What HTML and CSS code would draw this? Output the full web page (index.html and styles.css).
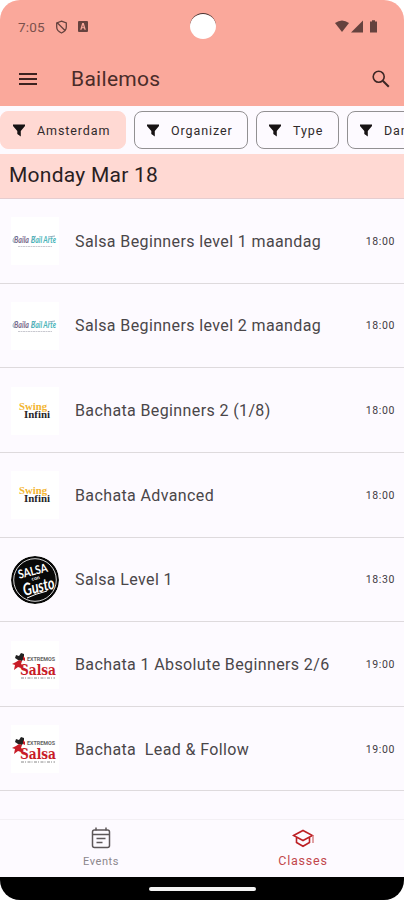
FILE: index.html
```html
<!DOCTYPE html>
<html lang="en">
<head>
    <meta charset="UTF-8">
    <meta name="viewport" content="width=device-width, initial-scale=1.0">
    <title>Bailemos</title>
    <link rel="stylesheet" href="styles.css">
</head>
<body>
    <svg class="defs" width="0" height="0">
        <symbol id="filter" viewBox="0 0 12 13">
            <path d="M0 0.5h12v1.6L7.8 7v5.5L4.3 10V7L0 2.1z"/>
        </symbol>
    </svg>

    <div class="phone">
        <header>
            <div class="status">
                <span class="clock">7:05</span>
                <svg class="blocked" width="13" height="14" viewBox="0 0 13 14"><path d="M6.500 1.200L11.300 3v4q0 4-4.800 6Q1.700 11 1.700 7V3zM2.500 3l8 8" fill="none" stroke="#65423e" stroke-width="1.300"/></svg>
                <svg class="badgeA" width="10" height="11" viewBox="0 0 10 11"><path fill="#65423e" fill-rule="evenodd" d="M1 0h8q1 0 1 1v9q0 1-1 1H1q-1 0-1-1V1q0-1 1-1zM4.200 2L2.200 8.800h1.300L4 7.300h2l.5 1.500h1.300L5.800 2zM5 3.800l.7 2.400H4.300z"/></svg>
                <svg class="signals" width="43" height="13" viewBox="0 0 43 13">
                    <g fill="#65423e">
                        <path d="M0 3q7-5 14 0L7 12z"/>
                        <path d="M28 0.500v12H16z"/>
                        <path d="M35 1.500h2V0.300h3v1.200h2v11h-7z"/>
                    </g>
                </svg>
                <span class="camera"></span>
            </div>
            <div class="toolbar">
                <svg width="18" height="14" viewBox="0 0 18 14"><path d="M0 2h18M0 7h18M0 12h18" stroke="#3c2220" stroke-width="1.900"/></svg>
                <h1>Bailemos</h1>
                <svg class="search" width="18" height="18" viewBox="0 0 18 18"><g fill="none" stroke="#3c2725"><circle cx="6.700" cy="6.700" r="5.500" stroke-width="1.600"/><path d="M10.800 10.800l6 6" stroke-width="2"/></g></svg>
            </div>
        </header>

        <div class="chips">
            <div class="chip active"><svg><use href="#filter"/></svg><span>Amsterdam</span></div>
            <div class="chip organizer"><svg><use href="#filter"/></svg><span>Organizer</span></div>
            <div class="chip type"><svg><use href="#filter"/></svg><span>Type</span></div>
            <div class="chip dance"><svg><use href="#filter"/></svg><span>Dance</span></div>
        </div>

        <h2>Monday Mar 18</h2>

        <div class="list">
            <div class="item">
                <svg class="logo baila" viewBox="0 0 48 48">
                    <text x="3" y="26" textLength="15" lengthAdjust="spacingAndGlyphs" fill="#79698b">Baila</text>
                    <text x="20" y="26" textLength="25" lengthAdjust="spacingAndGlyphs" fill="#4ab5b9">Bail Arte</text>
                    <path d="M5 25C1 27 1 22 5 19M21 26c-2-1 1-5 4-7M37 20l7-1" fill="none" stroke="#87a6b8" stroke-width=".9"/>
                    <path d="M7 29.500h34" stroke="#c9c9d0" stroke-width="1.200" stroke-dasharray="2 .5"/>
                </svg>
                <p>Salsa Beginners level 1 maandag</p><time>18:00</time>
            </div>
            <div class="item">
                <svg class="logo baila" viewBox="0 0 48 48">
                    <text x="3" y="26" textLength="15" lengthAdjust="spacingAndGlyphs" fill="#79698b">Baila</text>
                    <text x="20" y="26" textLength="25" lengthAdjust="spacingAndGlyphs" fill="#4ab5b9">Bail Arte</text>
                    <path d="M5 25C1 27 1 22 5 19M21 26c-2-1 1-5 4-7M37 20l7-1" fill="none" stroke="#87a6b8" stroke-width=".9"/>
                    <path d="M7 29.500h34" stroke="#c9c9d0" stroke-width="1.200" stroke-dasharray="2 .5"/>
                </svg>
                <p>Salsa Beginners level 2 maandag</p><time>18:00</time>
            </div>
            <div class="item">
                <svg class="logo swing" viewBox="0 0 48 48">
                    <text x="8" y="23" textLength="28" lengthAdjust="spacingAndGlyphs" fill="#f3b52f">Swing</text>
                    <text x="13" y="31" textLength="26" lengthAdjust="spacingAndGlyphs" fill="#252529">Infini</text>
                </svg>
                <p>Bachata Beginners 2 (1/8)</p><time>18:00</time>
            </div>
            <div class="item">
                <svg class="logo swing" viewBox="0 0 48 48">
                    <text x="8" y="23" textLength="28" lengthAdjust="spacingAndGlyphs" fill="#f3b52f">Swing</text>
                    <text x="13" y="31" textLength="26" lengthAdjust="spacingAndGlyphs" fill="#252529">Infini</text>
                </svg>
                <p>Bachata Advanced</p><time>18:00</time>
            </div>
            <div class="item">
                <svg class="logo gusto" viewBox="0 0 48 48">
                    <circle cx="24" cy="24" r="24" fill="#080808"/>
                    <circle cx="24" cy="24" r="21.300" fill="none" stroke="#d9d9d9"/>
                    <g fill="#fff" transform="rotate(-14 24 24)">
                        <text x="9" y="19" font-size="12" textLength="30" lengthAdjust="spacingAndGlyphs">SALSA</text>
                        <text x="21" y="24" font-size="5">con</text>
                        <text x="10" y="37" font-size="17" font-style="italic" textLength="32" lengthAdjust="spacingAndGlyphs">Gusto</text>
                    </g>
                    <path d="M16 42q8-4 20-7" fill="none" stroke="#fff"/>
                </svg>
                <p>Salsa Level 1</p><time>18:30</time>
            </div>
            <div class="item">
                <svg class="logo extremos" viewBox="0 0 48 48">
                    <text class="small" x="16" y="19.500" textLength="28" lengthAdjust="spacingAndGlyphs">EXTREMOS</text>
                    <text class="big" x="9" y="33.500" textLength="36" lengthAdjust="spacingAndGlyphs">Salsa</text>
                    <path d="M5 14l3 1 2-3 3 1v4l-2 3-4-1-3-2z" fill="#222"/>
                    <path d="M8 19l3 1-1 3 3 2-3 2-3-1-4 3 1-5-3-1 4-2zM12 15l2 2v3l-2-1z" fill="#c81c27"/>
                    <path d="M10 37h34" stroke="#888" stroke-dasharray="3 1 1 1.500"/>
                </svg>
                <p>Bachata 1 Absolute Beginners 2/6</p><time>19:00</time>
            </div>
            <div class="item">
                <svg class="logo extremos" viewBox="0 0 48 48">
                    <text class="small" x="16" y="19.500" textLength="28" lengthAdjust="spacingAndGlyphs">EXTREMOS</text>
                    <text class="big" x="9" y="33.500" textLength="36" lengthAdjust="spacingAndGlyphs">Salsa</text>
                    <path d="M5 14l3 1 2-3 3 1v4l-2 3-4-1-3-2z" fill="#222"/>
                    <path d="M8 19l3 1-1 3 3 2-3 2-3-1-4 3 1-5-3-1 4-2zM12 15l2 2v3l-2-1z" fill="#c81c27"/>
                    <path d="M10 37h34" stroke="#888" stroke-dasharray="3 1 1 1.500"/>
                </svg>
                <p>Bachata&nbsp; Lead &amp; Follow</p><time>19:00</time>
            </div>
        </div>

        <nav>
            <div class="tab">
                <svg width="20" height="22" viewBox="0 0 20 22"><g fill="none" stroke="#5d5759" stroke-width="1.500"><rect x="1.500" y="3" width="17" height="17.500" rx="2"/><path d="M1.500 7.500h17M5 0.500v3M15 0.500v3M5.500 11.500h9M5.500 15.500h6"/></g></svg>
                <span>Events</span>
            </div>
            <div class="tab selected">
                <svg width="22" height="22" viewBox="0 0 22 22"><g fill="none" stroke="#bd2025" stroke-width="1.600"><path d="M1.500 8.500L11 3.500l9.500 5L11 13.500zM4.500 10.500v5l6.500 3.800 6.500-3.800v-5"/><path d="M21 8.500v7.500" stroke="#d98a8d"/></g></svg>
                <span>Classes</span>
            </div>
        </nav>
        <div class="gesture"><span></span></div>
    </div>
</body>
</html>
```
FILE: styles.css
```css
*{
    box-sizing: border-box;
}
body{
    margin: 0;
    background: #fff;
    font-family: Roboto, sans-serif;
}
h1, h2, p{
    margin: 0;
    font-weight: 400;
}
svg{
    display: block;
    flex-shrink: 0;
}
.defs{
    position: absolute;
}
.phone{
    width: 404px;
    height: 900px;
    display: flex;
    flex-direction: column;
    overflow: hidden;
    border-radius: 20px;
    background: #fdfaff;
}
header{
    height: 106px;
    flex-shrink: 0;
    background: #faa89b;
}
.status{
    position: relative;
    height: 53px;
    display: flex;
    align-items: center;
    padding: 0 26px 0 18px;
    color: #7a514c;
}
.clock{
    width: 37px;
    font-size: 13.5px;
    letter-spacing: 0.2px;
}
.badgeA{
    margin-left: 10px;
}
.signals{
    margin-left: auto;
}
.camera{
    position: absolute;
    left: 190px;
    top: 13px;
    width: 26px;
    height: 26px;
    border-radius: 50%;
    background: #fff;
    border-top: 1px solid #49302e;
}
.toolbar{
    height: 53px;
    display: flex;
    align-items: center;
    padding: 0 14px 2px 19px;
}
h1{
    margin-left: 34px;
    font-size: 21px;
    letter-spacing: 0.3px;
    color: #4a2c29;
}
.search{
    margin-left: auto;
}
.chips{
    height: 48px;
    flex-shrink: 0;
    display: flex;
    gap: 8px;
    padding-top: 5px;
    overflow: hidden;
}
.chip{
    height: 38px;
    flex-shrink: 0;
    display: flex;
    align-items: center;
    gap: 12px;
    padding-left: 12px;
    border: 1px solid #929092;
    border-radius: 8px;
    font-size: 12.5px;
    letter-spacing: 0.9px;
    color: #302a2b;
}
.chip svg{
    width: 12px;
    height: 13px;
    fill: #171314;
}
.active{
    width: 126px;
    border-color: #ffd9d3;
    background: #ffd9d3;
}
.organizer{
    width: 114px;
}
.type{
    width: 83px;
}
.dance{
    width: 96px;
}
h2{
    height: 45px;
    flex-shrink: 0;
    padding-left: 9px;
    border-bottom: 1px solid #e5cdcf;
    background: #ffd9d3;
    font-size: 21px;
    line-height: 43px;
    letter-spacing: 0.25px;
    color: #29201f;
}
.list{
    flex: 1;
    overflow: hidden;
}
.item{
    height: 84.65px;
    display: flex;
    align-items: center;
    padding: 1px 9px 0 11px;
    border-bottom: 1px solid #dedadd;
}
.logo{
    width: 48px;
    height: 48px;
    background: #fff;
}
.baila{
    font: italic bold 9px Lato, sans-serif;
}
.swing{
    font: bold 10px "Liberation Serif", serif;
}
.gusto{
    border-radius: 50%;
    font-family: Lato, sans-serif;
    font-weight: bold;
}
.extremos .small{
    font: bold 5px Roboto, sans-serif;
    fill: #666;
}
.extremos .big{
    font: bold 15px "DejaVu Serif", serif;
    fill: #c81c27;
}
.item p{
    margin-left: 16px;
    font-size: 16px;
    letter-spacing: 0.38px;
    white-space: nowrap;
    color: #4a4649;
}
.item time{
    margin-left: auto;
    font-size: 10.5px;
    letter-spacing: 0.6px;
    color: #3f3b43;
}
nav{
    height: 58px;
    flex-shrink: 0;
    display: flex;
    border-top: 1px solid #f3f0f4;
}
.tab{
    flex: 1;
    display: flex;
    flex-direction: column;
    align-items: center;
    padding-top: 7px;
    font-size: 11px;
    letter-spacing: 0.6px;
    color: #8c878c;
}
.tab span{
    margin-top: 6px;
}
.selected{
    font-size: 12.5px;
    letter-spacing: 0.8px;
    color: #c2474b;
}
.selected span{
    margin-top: 4px;
}
.gesture{
    height: 23px;
    flex-shrink: 0;
    display: flex;
    align-items: center;
    justify-content: center;
    background: #000;
}
.gesture span{
    width: 107px;
    height: 4px;
    border-radius: 2px;
    background: #f3f3f3;
}
```
